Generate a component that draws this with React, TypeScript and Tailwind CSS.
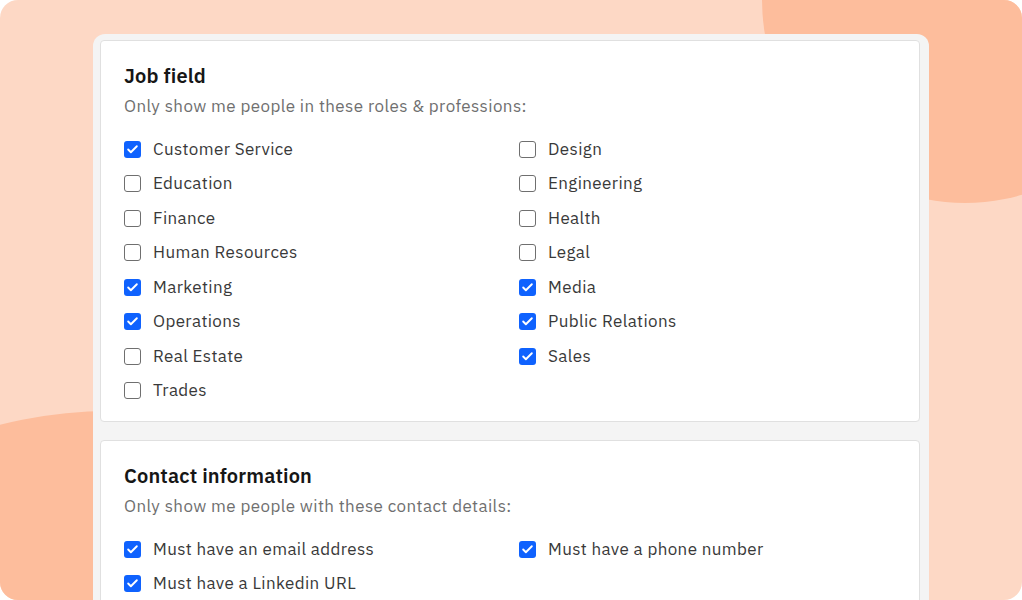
import { Check } from 'lucide-react'

type Option = { label: string; checked: boolean }

const JOB_FIELDS: Option[] = [
  { label: 'Customer Service', checked: true },
  { label: 'Design', checked: false },
  { label: 'Education', checked: false },
  { label: 'Engineering', checked: false },
  { label: 'Finance', checked: false },
  { label: 'Health', checked: false },
  { label: 'Human Resources', checked: false },
  { label: 'Legal', checked: false },
  { label: 'Marketing', checked: true },
  { label: 'Media', checked: true },
  { label: 'Operations', checked: true },
  { label: 'Public Relations', checked: true },
  { label: 'Real Estate', checked: false },
  { label: 'Sales', checked: true },
  { label: 'Trades', checked: false },
]

const CONTACT: Option[] = [
  { label: 'Must have an email address', checked: true },
  { label: 'Must have a phone number', checked: true },
  { label: 'Must have a Linkedin URL', checked: true },
]

function Checkbox({ label, checked }: Option) {
  return (
    <label className="flex h-[34.5px] items-center gap-[12px] text-[17px] tracking-[0.38px] text-[#393939]">
      {checked ? (
        <span className="flex h-[17px] w-[17px] items-center justify-center rounded-[3px] bg-[#0f62fe]">
          <Check className="h-[13px] w-[13px] text-white" strokeWidth={3.5} />
        </span>
      ) : (
        <span className="h-[17px] w-[17px] rounded-[3px] border-[1.5px] border-[#6f6f6f] bg-white" />
      )}
      {label}
    </label>
  )
}

function FilterCard({ title, hint, options }: { title: string; hint: string; options: Option[] }) {
  return (
    <div className="rounded-[4px] border border-[#e0e0e0] bg-white px-[23px] pb-[13px] pt-[23px]">
      <h2 className="text-[20px] font-semibold leading-[24px] tracking-[0.15px] text-[#161616]">{title}</h2>
      <p className="mt-[6px] text-[17px] leading-[24px] tracking-[0.4px] text-[#6f6f6f]">{hint}</p>
      <div className="mt-[14px] grid grid-cols-2 gap-x-[18px]">
        {options.map((o) => (
          <Checkbox key={o.label} {...o} />
        ))}
      </div>
    </div>
  )
}

export default function App() {
  return (
    <div
      className="h-[600px] w-[1022px] bg-white"
      style={{ fontFamily: "'IBM Plex Sans', Inter, 'Noto Sans', sans-serif" }}
    >
      <div className="relative h-full w-full overflow-hidden rounded-[18px] bg-[#fdd8c5]">
        {/* decorative blobs */}
        <div className="absolute left-[762px] top-[-203px] h-[406px] w-[406px] rounded-full bg-[#fdbd9c]" />
        <div className="absolute left-[-340px] top-[411px] h-[900px] w-[900px] rounded-full bg-[#fdbd9c]" />

        <div className="relative ml-[93px] mt-[34px] flex h-[566px] w-[836px] flex-col gap-[18px] rounded-t-[12px] bg-[#f4f4f4] pl-[7px] pr-[9px] pt-[6px]">
          <FilterCard
            title="Job field"
            hint="Only show me people in these roles & professions:"
            options={JOB_FIELDS}
          />
          <FilterCard
            title="Contact information"
            hint="Only show me people with these contact details:"
            options={CONTACT}
          />
        </div>
      </div>
    </div>
  )
}
